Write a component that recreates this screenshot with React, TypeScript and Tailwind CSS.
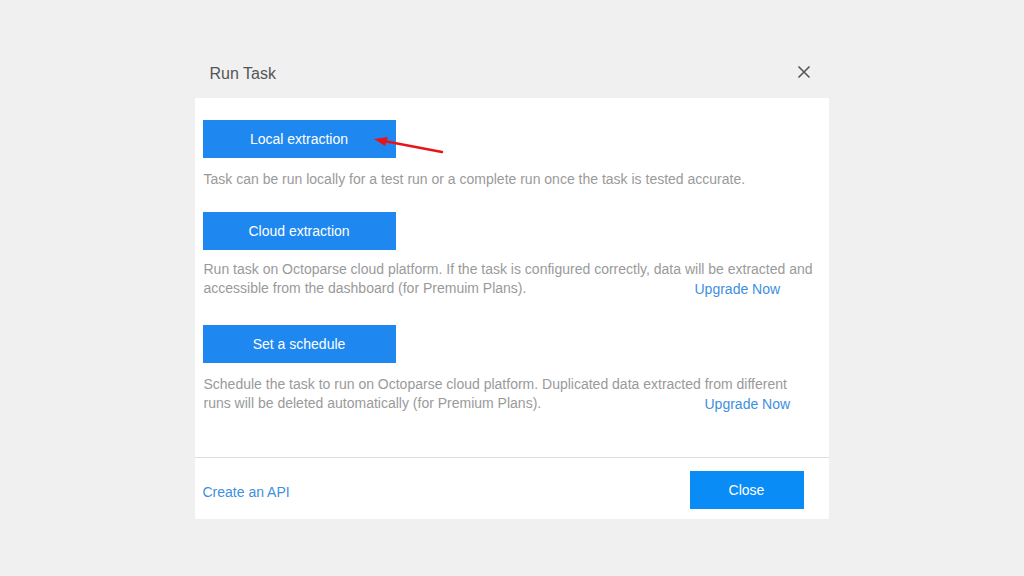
import React from 'react';

const font = { fontFamily: '"Liberation Sans", Arial, sans-serif' };

// Blue action button used for each run option
const ActionButton = ({ label }: { label: string }) => (
  <button className="w-[193px] h-[38px] bg-[#1e88f0] text-white text-[14px] flex items-center justify-center">
    {label}
  </button>
);

const Option = ({
  label,
  lines,
  textWidth,
  upgrade,
  descTop,
}: {
  label: string;
  lines: string[];
  textWidth?: string;
  upgrade?: boolean;
  descTop: string;
}) => (
  <div className="flex flex-col">
    <ActionButton label={label} />
    <div className={`${descTop} text-[14px] leading-[19px] text-[#9a9a9a] pl-[1px] whitespace-nowrap`}>
      <div>{lines[0]}</div>
      {lines[1] && (
        <div className="flex">
          <span className={textWidth}>{lines[1]}</span>
          {upgrade && <a className="text-[#3d8fe0] mt-[1px]">Upgrade Now</a>}
        </div>
      )}
    </div>
  </div>
);

export default function App() {
  return (
    <div className="w-[1024px] h-[576px] bg-[#f0f0f0] flex justify-center" style={font}>
      <div className="w-[634px] mt-[55px] mr-[1px] flex flex-col relative">
        <div className="h-[43px] flex items-center justify-between pl-[15px] pr-[18px]">
          <span className="text-[16px] text-[#555] -mt-[6px]">Run Task</span>
          <svg width="14" height="14" viewBox="0 0 14 14" className="-mt-[10px]">
            <path d="M1.5 1.5 L12.5 12.5 M12.5 1.5 L1.5 12.5" stroke="#555" strokeWidth="1.6" />
          </svg>
        </div>
        <div className="bg-white h-[421px] flex flex-col">
          <div className="flex flex-col pl-[8px] pt-[22px] h-[359px]">
            <Option
              label="Local extraction"
              descTop="mt-[12px]"
              lines={['Task can be run locally for a test run or a complete run once the task is tested accurate.']}
            />
            <div className="mt-[23px]">
              <Option
                label="Cloud extraction"
                descTop="mt-[10px]"
                lines={[
                  'Run task on Octoparse cloud platform. If the task is configured correctly, data will be extracted and',
                  'accessible from the dashboard (for Premuim Plans).',
                ]}
                upgrade
                textWidth="w-[491px]"
              />
            </div>
            <div className="mt-[26px]">
              <Option
                label="Set a schedule"
                descTop="mt-[12px]"
                lines={[
                  'Schedule the task to run on Octoparse cloud platform. Duplicated data extracted from different',
                  'runs will be deleted automatically (for Premium Plans).',
                ]}
                upgrade
                textWidth="w-[501px]"
              />
            </div>
          </div>
          <div className="border-t border-[#dcdcdc] flex-1 flex items-center justify-between pl-[8px] pr-[25px]">
            <a className="text-[14px] text-[#3d8fe0] mt-[7px]">Create an API</a>
            <button className="w-[114px] h-[38px] bg-[#0a8cf7] text-white text-[14px] mt-[3px]">Close</button>
          </div>
        </div>
        {/* red annotation arrow */}
        <svg className="absolute left-[175px] top-[78px]" width="80" height="30" viewBox="0 0 80 30">
          <path d="M72 19 L14 8" stroke="#e8141a" strokeWidth="2.5" strokeLinecap="round" />
          <path d="M4 6 L18 4 L15 13 Z" fill="#e8141a" />
        </svg>
      </div>
    </div>
  );
}
